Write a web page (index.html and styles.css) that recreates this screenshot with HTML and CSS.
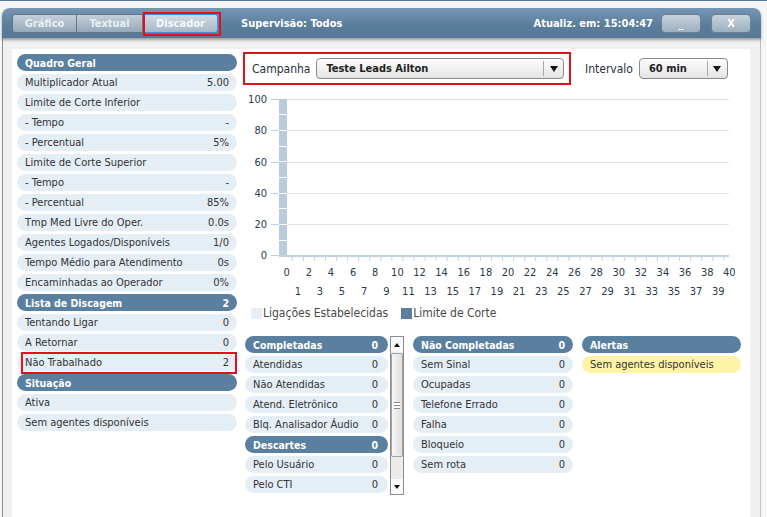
FILE: index.html
```html
<!DOCTYPE html>
<html lang="pt">
<head>
<meta charset="utf-8">
<title>Discador</title>
<link rel="stylesheet" href="styles.css">
</head>
<body>
<div class="topline"></div>
<div class="window">
  <div class="titlebar">
    <div class="tabs">
      <button class="tab tab-g">Gráfico</button><button class="tab tab-t">Textual</button><button class="tab tab-d active">Discador</button>
      <span class="mark mark-tab"></span>
    </div>
    <span class="sup">Supervisão: Todos</span>
    <span class="spacer"></span>
    <span class="upd">Atualiz. em: 15:04:47</span>
    <button class="wbtn">_</button>
    <button class="wbtn wbtn-x">X</button>
  </div>
  <div class="body">
    <div class="panel">
      <div class="left">
        <div class="pill head"><span>Quadro Geral</span></div>
        <div class="pill"><span>Multiplicador Atual</span><span>5.00</span></div>
        <div class="pill"><span>Limite de Corte Inferior</span></div>
        <div class="pill"><span>- Tempo</span><span>-</span></div>
        <div class="pill"><span>- Percentual</span><span>5%</span></div>
        <div class="pill"><span>Limite de Corte Superior</span></div>
        <div class="pill"><span>- Tempo</span><span>-</span></div>
        <div class="pill"><span>- Percentual</span><span>85%</span></div>
        <div class="pill"><span>Tmp Med Livre do Oper.</span><span>0.0s</span></div>
        <div class="pill"><span>Agentes Logados/Disponíveis</span><span>1/0</span></div>
        <div class="pill"><span>Tempo Médio para Atendimento</span><span>0s</span></div>
        <div class="pill"><span>Encaminhadas ao Operador</span><span>0%</span></div>
        <div class="pill head"><span>Lista de Discagem</span><span>2</span></div>
        <div class="pill"><span>Tentando Ligar</span><span>0</span></div>
        <div class="pill"><span>A Retornar</span><span>0</span></div>
        <div class="pill marked"><span>Não Trabalhado</span><span>2</span></div>
        <div class="pill head"><span>Situação</span></div>
        <div class="pill"><span>Ativa</span></div>
        <div class="pill"><span>Sem agentes disponíveis</span></div>
      </div>
      <div class="right">
        <div class="controls">
          <div class="campbox">
            <span class="lbl">Campanha</span>
            <div class="select sel-camp"><span class="val">Teste Leads Ailton</span><span class="arr"><i></i></span></div>
          </div>
          <span class="lbl lbl-int">Intervalo</span>
          <div class="select sel-int"><span class="val">60 min</span><span class="arr"><i></i></span></div>
        </div>
        <svg class="chart" width="507" height="214" viewBox="0 0 507 214">
          <path class="grid" d="M36 11.5H486M36 42.5H486M36 74.5H486M36 105.5H486M36 136.5H486"/>
          <path class="yticks" d="M28 11.5H36M28 42.5H36M28 74.5H36M28 105.5H36M28 136.5H36M28 167.5H36"/>
          <g class="ylabels">
            <text x="24" y="15">100</text>
            <text x="24" y="46">80</text>
            <text x="24" y="78">60</text>
            <text x="24" y="109">40</text>
            <text x="24" y="140">20</text>
            <text x="24" y="171">0</text>
          </g>
          <rect class="bar" x="36" y="11" width="8" height="157"/>
          <path class="barsep" d="M36 26.5H44M36 42.5H44M36 58.5H44M36 73.5H44M36 89.5H44M36 105.5H44M36 120.5H44M36 136.5H44M36 152.5H44"/>
          <line class="xaxis" x1="36" y1="168" x2="486" y2="168"/>
          <path class="xticks" d="M49.3 168v5M60.4 168v5M71.4 168v5M82.5 168v5M93.6 168v5M104.6 168v5M115.7 168v5M126.8 168v5M137.8 168v5M148.9 168v5M159.9 168v5M171 168v5M182.1 168v5M193.1 168v5M204.2 168v5M215.3 168v5M226.3 168v5M237.4 168v5M248.5 168v5M259.5 168v5M270.6 168v5M281.7 168v5M292.7 168v5M303.8 168v5M314.9 168v5M325.9 168v5M337 168v5M348.1 168v5M359.1 168v5M370.2 168v5M381.3 168v5M392.3 168v5M403.4 168v5M414.4 168v5M425.5 168v5M436.6 168v5M447.6 168v5M458.7 168v5M469.8 168v5M480.8 168v5"/>
          <g class="xlabels">
            <text x="43.7" y="188">0</text>
            <text x="54.8" y="207">1</text>
            <text x="65.8" y="188">2</text>
            <text x="76.9" y="207">3</text>
            <text x="88" y="188">4</text>
            <text x="99" y="207">5</text>
            <text x="110.1" y="188">6</text>
            <text x="121.2" y="207">7</text>
            <text x="132.2" y="188">8</text>
            <text x="143.3" y="207">9</text>
            <text x="154.4" y="188">10</text>
            <text x="165.4" y="207">11</text>
            <text x="176.5" y="188">12</text>
            <text x="187.5" y="207">13</text>
            <text x="198.6" y="188">14</text>
            <text x="209.7" y="207">15</text>
            <text x="220.7" y="188">16</text>
            <text x="231.8" y="207">17</text>
            <text x="242.9" y="188">18</text>
            <text x="253.9" y="207">19</text>
            <text x="265" y="188">20</text>
            <text x="276.1" y="207">21</text>
            <text x="287.1" y="188">22</text>
            <text x="298.2" y="207">23</text>
            <text x="309.3" y="188">24</text>
            <text x="320.3" y="207">25</text>
            <text x="331.4" y="188">26</text>
            <text x="342.5" y="207">27</text>
            <text x="353.5" y="188">28</text>
            <text x="364.6" y="207">29</text>
            <text x="375.7" y="188">30</text>
            <text x="386.7" y="207">31</text>
            <text x="397.8" y="188">32</text>
            <text x="408.8" y="207">33</text>
            <text x="419.9" y="188">34</text>
            <text x="431" y="207">35</text>
            <text x="442" y="188">36</text>
            <text x="453.1" y="207">37</text>
            <text x="464.2" y="188">38</text>
            <text x="475.2" y="207">39</text>
            <text x="486.3" y="188">40</text>
          </g>
        </svg>
        <div class="legend">
          <span class="sw sw-a"></span><span>Ligações Estabelecidas</span>
          <span class="sw sw-b"></span><span>Limite de Corte</span>
        </div>
        <div class="tables">
          <div class="scrollbox">
            <div class="col col-c">
              <div class="pill head"><span>Completadas</span><span>0</span></div>
              <div class="pill"><span>Atendidas</span><span>0</span></div>
              <div class="pill"><span>Não Atendidas</span><span>0</span></div>
              <div class="pill"><span>Atend. Eletrônico</span><span>0</span></div>
              <div class="pill"><span>Blq. Analisador Áudio</span><span>0</span></div>
              <div class="pill head"><span>Descartes</span><span>0</span></div>
              <div class="pill"><span>Pelo Usuário</span><span>0</span></div>
              <div class="pill"><span>Pelo CTI</span><span>0</span></div>
            </div>
            <div class="vscroll">
              <div class="sb-btn"><i class="up"></i></div>
              <div class="sb-thumb"><span class="grip"></span></div>
              <div class="sb-track"></div>
              <div class="sb-btn"><i class="down"></i></div>
            </div>
          </div>
          <div class="col col-n">
            <div class="pill head"><span>Não Completadas</span><span>0</span></div>
            <div class="pill"><span>Sem Sinal</span><span>0</span></div>
            <div class="pill"><span>Ocupadas</span><span>0</span></div>
            <div class="pill"><span>Telefone Errado</span><span>0</span></div>
            <div class="pill"><span>Falha</span><span>0</span></div>
            <div class="pill"><span>Bloqueio</span><span>0</span></div>
            <div class="pill"><span>Sem rota</span><span>0</span></div>
          </div>
          <div class="col col-a">
            <div class="pill head"><span>Alertas</span></div>
            <div class="pill alert"><span>Sem agentes disponíveis</span></div>
          </div>
        </div>
      </div>
    </div>
  </div>
</div>
</body>
</html>
```

FILE: styles.css
```css
* { box-sizing: border-box; }
html, body { margin: 0; padding: 0; }
body {
  width: 767px;
  height: 517px;
  overflow: hidden;
  background: #f6f6f6;
  font-family: "DejaVu Sans Condensed", "DejaVu Sans", sans-serif;
  font-size: 11px;
  color: #333;
}
button { font-family: inherit; cursor: default; }

.topline { height: 1px; background: #56789a; }

.window { margin: 7px 0 0 2px; width: 759px; }

.titlebar {
  position: relative;
  z-index: 1;
  height: 30px;
  display: flex;
  align-items: center;
  padding: 0 10px;
  background: linear-gradient(#7696b3, #5a7d9c 60%, #56799a);
  border-radius: 8px 8px 0 0;
  box-shadow: 0 2px 3px rgba(0, 0, 0, 0.35);
  color: #fff;
  font-weight: bold;
  font-size: 11px;
}
.tabs { position: relative; display: flex; }
.tab {
  height: 19px;
  padding: 0;
  border: 1px solid #647686;
  background: linear-gradient(#c4cfd9, #95a9ba);
  color: #eaeff3;
  font-weight: bold;
  font-size: 11px;
  text-align: center;
}
.tab-g { width: 65px; border-radius: 3px 0 0 3px; }
.tab-t { width: 66px; border-left: none; }
.tab-d { width: 75px; border-radius: 0 3px 3px 0; }
.tab.active {
  border: 1px solid #3a8fe2;
  background: linear-gradient(#d0dae3, #a6b8c8);
  color: #f6f8fa;
}
.mark { position: absolute; border: 2px solid #e3101c; pointer-events: none; }
.mark-tab { left: 131px; top: -2px; width: 78px; height: 24px; }

.sup { margin-left: 23px; }
.spacer { flex: 1; }
.upd { margin-right: 8px; }
.wbtn {
  width: 40px;
  height: 19px;
  padding: 0;
  border: 1px solid #6c7e8f;
  border-radius: 4px;
  background: linear-gradient(#c8d3dc, #9cafbf);
  color: #fff;
  font-weight: bold;
  font-size: 11px;
}
.wbtn-x { margin-left: 10px; }

.body {
  height: 479px;
  border-left: 1px solid #8e8e8e;
  border-right: 1px solid #c2c2c2;
  background: #f0f0f0;
  padding: 11px 10px 0 9px;
}
.panel { background: #fff; display: flex; height: 100%; }

.left {
  width: 231px;
  padding: 5px 6px 0 5px;
  display: flex;
  flex-direction: column;
  gap: 3px;
}
.pill {
  position: relative;
  height: 17px;
  border-radius: 9px;
  background: #e5edf5;
  display: flex;
  justify-content: space-between;
  align-items: center;
  padding: 0 8px;
  white-space: nowrap;
  color: #333;
}
.pill.head { background: #5b7f9e; color: #fff; font-weight: bold; font-size: 10.5px; }
.pill.alert { background: #fff3a6; }
.pill.marked::after {
  content: "";
  position: absolute;
  left: 4px; right: 0; top: -2px; bottom: -3px;
  border: 2px solid #e3101c;
}

.right { width: 507px; padding-top: 3px; }
.controls { display: flex; align-items: center; height: 33px; }
.campbox {
  width: 328px;
  height: 33px;
  border: 2px solid #e3101c;
  display: flex;
  align-items: center;
  padding: 0 4px 0 7px;
}
.lbl { color: #1f3242; font-size: 12px; }
.lbl-int { margin-left: 14px; }
.select {
  margin-left: 6px;
  height: 21px;
  border: 1px solid #8a8a8a;
  border-radius: 4px;
  background: linear-gradient(#fdfdfd, #e4e4e4);
  display: flex;
  align-items: center;
  font-weight: bold;
  color: #222;
}
.sel-camp { width: 248px; }
.sel-int { width: 89px; }
.select .val { flex: 1; padding-left: 9px; }
.select .arr {
  width: 20px;
  height: 15px;
  border-left: 1px solid #a8a8a8;
  display: flex;
  align-items: center;
  justify-content: center;
}
.select .arr i {
  width: 0; height: 0;
  border-left: 4px solid transparent;
  border-right: 4px solid transparent;
  border-top: 6px solid #111;
}

.chart { display: block; margin-top: 3px; font-family: "DejaVu Sans Condensed", "DejaVu Sans", sans-serif; }
.grid { stroke: #e4e4e4; stroke-width: 1; fill: none; }
.yticks { stroke: #c0d0e0; stroke-width: 1; fill: none; }
.ylabels text { font-size: 11px; fill: #2a3b4b; text-anchor: end; }
.bar { fill: #bacbdc; }
.barsep { stroke: #fff; stroke-width: 1; fill: none; }
.xaxis { stroke: #c2d2e1; stroke-width: 2; }
.xticks { stroke: #c2d2e1; stroke-width: 1; fill: none; }
.xlabels text { font-size: 11px; fill: #2a3b4b; text-anchor: middle; }

.legend {
  display: flex;
  align-items: center;
  height: 14px;
  margin-top: 4px;
  padding-left: 8px;
  color: #4a4a4a;
  font-size: 12px;
}
.sw { width: 11px; height: 11px; margin-right: 1px; }
.sw-a { background: #e6edf5; }
.sw-b { background: #5b7f9e; margin-left: 13px; }

.tables { display: flex; margin-top: 16px; padding-left: 2px; align-items: flex-start; }
.scrollbox { display: flex; height: 159px; overflow: hidden; }
.col { display: flex; flex-direction: column; gap: 3px; }
.col-c { width: 143px; }
.col-c .pill { padding-right: 10px; }
.col-n { width: 160px; margin-left: 9px; }
.col-a { width: 159px; margin-left: 9px; }

.vscroll {
  width: 14px;
  height: 159px;
  margin-left: 2px;
  border: 1px solid #8c8c8c;
  background: #ebebeb;
  display: flex;
  flex-direction: column;
}
.sb-btn {
  height: 15px;
  background: #fafafa;
  display: flex;
  align-items: center;
  justify-content: center;
}
.sb-btn i { width: 0; height: 0; border-left: 3px solid transparent; border-right: 3px solid transparent; }
.sb-btn i.up { border-bottom: 4px solid #111; }
.sb-btn i.down { border-top: 4px solid #111; }
.sb-thumb {
  height: 104px;
  margin-top: 1px;
  border: 1px solid #a3a3a3;
  border-radius: 2px;
  background: linear-gradient(90deg, #f7f7f7, #dedede);
  display: flex;
  align-items: center;
  justify-content: center;
}
.grip { width: 6px; height: 7px; border-top: 1px solid #888; border-bottom: 1px solid #888; background: linear-gradient(#fff 2px, #888 2px, #888 3px, #fff 3px); }
.sb-track { flex: 1; }
```
